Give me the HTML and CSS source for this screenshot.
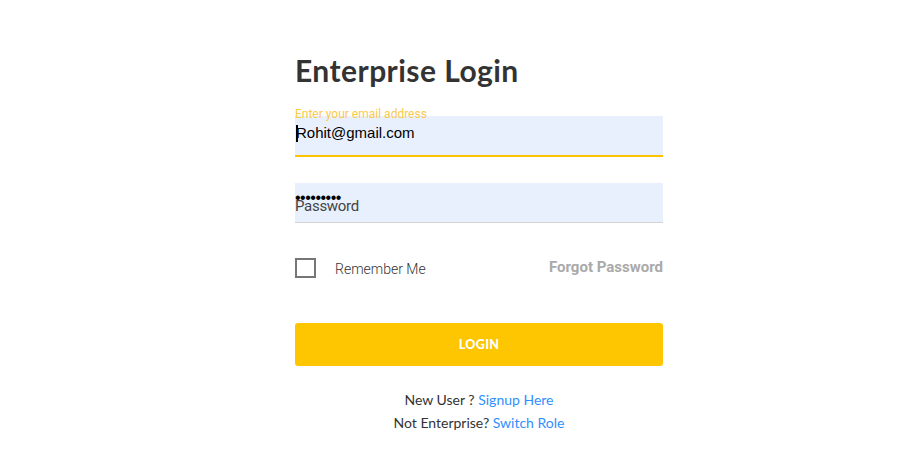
FILE: index.html
```html
<!DOCTYPE html>
<html>
<head>
<meta charset="utf-8">
<link rel="stylesheet" href="styles.css">
</head>
<body>
<main class="login">
  <h1 class="title">Enterprise Login</h1>
  <div class="field field-email">
    <label class="float-label">Enter your email address</label>
    <div class="input-box email-box"><span class="caret"></span><span class="email-value">Rohit@gmail.com</span></div>
  </div>
  <div class="field field-pass">
    <div class="input-box pass-box">
      <span class="dots">•••••••••</span>
      <span class="pass-placeholder">Password</span>
    </div>
  </div>
  <div class="options">
    <label class="remember"><span class="checkbox"></span><span class="remember-text">Remember Me</span></label>
    <a class="forgot">Forgot Password</a>
  </div>
  <button class="login-btn">LOGIN</button>
  <div class="links">
    <p>New User ? <a class="link">Signup Here</a></p>
    <p>Not Enterprise? <a class="link">Switch Role</a></p>
  </div>
</main>
</body>
</html>
```
FILE: styles.css
```css
html, body { margin: 0; padding: 0; background: #fff; }
body { width: 898px; height: 455px; overflow: hidden; }
.login {
  width: 368px;
  margin-left: 295px;
  padding-top: 50px;
  display: flex;
  flex-direction: column;
}
.title {
  margin: 0;
  font-family: "Lato", sans-serif;
  font-weight: 700;
  font-size: 30px;
  line-height: 40px;
  color: #333;
  letter-spacing: 0.45px;
}
.field { position: relative; }
.field-email { margin-top: 26px; }
.float-label {
  position: absolute;
  left: 0;
  top: -9px;
  font-family: "Roboto", sans-serif;
  font-size: 12px;
  line-height: 14px;
  color: #fcc94a;
  z-index: 1;
}
.input-box {
  background: #e8f0fe;
  height: 39px;
  position: relative;
}
.email-box {
  border-bottom: 2px solid #fcc400;
  display: flex;
  align-items: flex-start;
  padding-top: 7px;
  box-sizing: content-box;
  height: 32px;
}
.caret { width: 2px; height: 17px; background: #000; margin-top: 2px; margin-left: 1px; }
.email-value {
  font-family: "Liberation Sans", Arial, sans-serif;
  font-size: 15px;
  line-height: 20px;
  color: #000;
  margin-left: -2px;
}
.field-pass { margin-top: 26px; }
.pass-box {
  border-bottom: 1px solid #d4d4d4;
  height: 39px;
}
.dots {
  position: absolute;
  left: 0;
  top: 6px;
  font-family: "Liberation Sans", Arial, sans-serif;
  font-size: 16px;
  line-height: 18px;
  letter-spacing: -0.5px;
  color: #000;
}
.pass-placeholder {
  position: absolute;
  left: 0;
  top: 14px;
  font-family: "Roboto", sans-serif;
  font-size: 15px;
  line-height: 18px;
  color: #444;
  letter-spacing: -0.3px;
}
.options {
  margin-top: 34px;
  display: flex;
  justify-content: space-between;
  align-items: center;
  height: 22px;
}
.remember { display: flex; align-items: center; }
.checkbox {
  width: 17px; height: 16px;
  border: 2px solid #767676;
  display: inline-block;
}
.remember-text {
  margin-left: 19px;
  font-family: "Roboto", sans-serif;
  font-weight: 300;
  font-size: 14px;
  color: #333;
  margin-top: 1px;
}
.forgot {
  font-family: "Roboto", sans-serif;
  font-weight: 700;
  font-size: 15px;
  color: #aaa;
  margin-top: -3px;
}
.login-btn {
  margin-top: 44px;
  height: 43px;
  width: 100%;
  border: none;
  border-radius: 3px;
  background: #fec600;
  color: #fff;
  font-family: "Lato", sans-serif;
  font-weight: 900;
  font-size: 12.5px;
  letter-spacing: 0.3px;
}
.links {
  margin-top: 22px;
  text-align: center;
  font-family: "Lato", sans-serif;
  font-size: 14px;
  color: #333;
}
.links p { margin: 0; line-height: 23px; }
.link { color: #2f8fff; }
```
